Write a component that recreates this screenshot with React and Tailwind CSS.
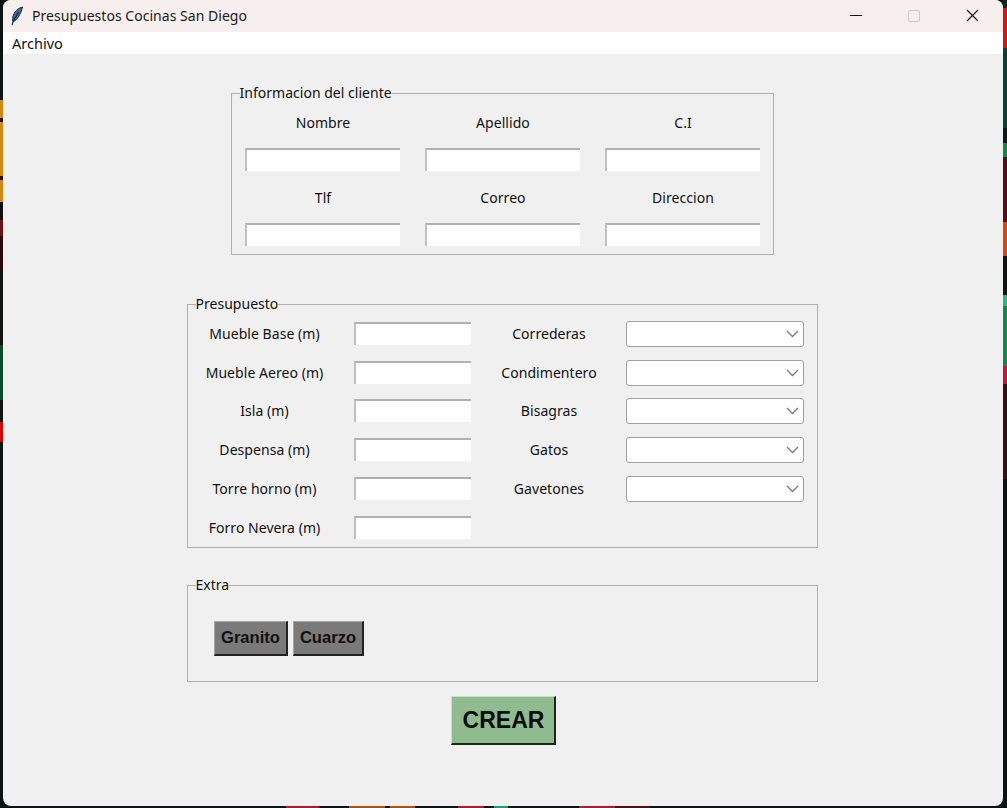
const leftStrip = [
  ["#0b1414", 100], ["#d08a14", 18], ["#2a1010", 4], ["#d08a14", 54], ["#2a1010", 4], ["#d08a14", 22],
  ["#0f0f0f", 18], ["#6a1414", 16], ["#2a0a0f", 34], ["#0f1414", 75], ["#0c4a2c", 55], ["#0f1414", 22],
  ["#d20a0a", 20], ["#0b1414", 366],
];
const rightStrip = [
  ["#0c2a24", 8], ["#e01010", 40], ["#0c4034", 80], ["#0f1a1a", 15], ["#0f8a3a", 14], ["#5a0a18", 65],
  ["#d8480f", 34], ["#101414", 39], ["#25b888", 11], ["#0f8a4a", 60], ["#c8143c", 18], ["#3a1010", 95], ["#0a1214", 329],
];
const bottomStrip = [
  ["#0b1414", 286], ["#b01834", 33], ["#0b1414", 30], ["#a8521c", 36], ["#0b1414", 5], ["#a8521c", 25],
  ["#0b1414", 43], ["#b01834", 26], ["#0b1414", 10], ["#1f9a78", 14], ["#0b1414", 71], ["#b01834", 36],
  ["#4a1018", 35], ["#0b1414", 354],
];

function Entry({ className }) {
  return (
    <input
      readOnly
      className={`block bg-white outline-none border-t-2 border-l-2 border-r-0 border-b-0 border-t-[#b0b0b0] border-l-[#c0c0c0] ${className}`}
    />
  );
}

function Combo() {
  return (
    <div className="w-[178px] h-[26px] bg-white border border-[#a0a0a0] rounded-[3px] flex items-center justify-end pr-[4px]">
      <svg width="13" height="8" viewBox="0 0 13 8" fill="none" stroke="#7a7a7a" strokeWidth="1.3">
        <path d="M1 1l5.5 5.5L12 1" />
      </svg>
    </div>
  );
}

function Group({ title, className, children }) {
  return (
    <fieldset className={`border border-[#b0b0b0] ${className}`}>
      <legend className="ml-[8px] text-[14px] tracking-[0.02px] leading-[16px] text-[#111]">{title}</legend>
      {children}
    </fieldset>
  );
}

function Info({ label }) {
  return (
    <div className="w-[155px] flex flex-col items-center">
      <div className="h-[24px] pl-[2px] leading-[24px] text-[14px] tracking-[0.05px] text-[#111] whitespace-nowrap">{label}</div>
      <Entry className="w-[155px] h-[23px] mt-[13px]" />
    </div>
  );
}

const left = ["Mueble Base (m)", "Mueble Aereo (m)", "Isla (m)", "Despensa (m)", "Torre horno (m)", "Forro Nevera (m)"];
const right = ["Correderas", "Condimentero", "Bisagras", "Gatos", "Gavetones"];
const btn = "bg-[#7a7a7a] pl-[1px] border-t border-l border-r-2 border-b-2 border-t-[#a8a8a8] border-l-[#a8a8a8] border-r-[#222] border-b-[#222] h-[35px] text-[16.6px] font-bold text-[#111] font-['Liberation_Sans',sans-serif]";

function Strip({ data, vertical }) {
  return (
    <div className={vertical ? "flex flex-col w-full" : "flex h-[2px] w-full"}>
      {data.map(([c, n], i) => (
        <div key={i} style={vertical ? { background: c, height: n } : { background: c, width: n }} />
      ))}
    </div>
  );
}

export default function App() {
  return (
    <div className="w-[1007px] h-[808px] overflow-hidden bg-[#0b1414] font-['Noto_Sans','Open_Sans',sans-serif]">
      <div className="flex h-[806px]">
        <div className="w-[3px] shrink-0"><Strip data={leftStrip} vertical /></div>
        <div className="w-[1000px] h-[806px] shrink-0 rounded-[8px] overflow-hidden bg-[#f0f0f0] flex flex-col">
          <div className="h-[32px] shrink-0 bg-[#f6efed] flex items-center">
            <svg className="ml-[7px]" width="14" height="20" viewBox="0 0 14 20">
              <path d="M12.5 1C8 2 4 6 2.8 11c-.4 2-.3 3.6.2 4.6C7 14.5 11 8 12.5 1z" fill="#3d6d9e" stroke="#16283c" strokeWidth="1" />
              <path d="M8.5 6 3.4 15 2 19" fill="none" stroke="#16283c" strokeWidth="1.1" />
            </svg>
            <span className="ml-[8px] mb-[2px] text-[14px] tracking-[0.03px] text-[#1a1a1a] whitespace-nowrap">Presupuestos Cocinas San Diego</span>
            <div className="ml-auto flex items-center mr-[24px] mb-[1px]">
              <div className="w-[12px] h-px bg-[#111]" />
              <div className="ml-[46px] w-[12px] h-[12px] border border-[#cfcbc9] rounded-[2px]" />
              <svg className="ml-[46px]" width="13" height="13" viewBox="0 0 13 13" stroke="#111" strokeWidth="1.1"><path d="M1 1l11 11M12 1 1 12" /></svg>
            </div>
          </div>
          <div className="h-[22px] shrink-0 bg-white flex items-center pl-[9px] pt-[2px] text-[14.5px] text-[#111]">Archivo</div>

          <main className="flex flex-col items-center pr-[2px]">
            <Group title="Informacion del cliente" className="w-[543px] h-[170px] mt-[31px]">
              <div className="grid grid-cols-[155px_155px_155px] gap-x-[25px] gap-y-[15px] mt-[10px] ml-[13px]">
                {["Nombre", "Apellido", "C.I", "Tlf", "Correo", "Direccion"].map((l) => (
                  <Info key={l} label={l} />
                ))}
              </div>
            </Group>

            <Group title="Presupuesto" className="w-[631px] h-[252px] mt-[41px]">
              <div className="grid grid-cols-[126px_117px_155px_178px] auto-rows-[38.8px] items-center mt-[2px] ml-[14px]">
                {left.map((l, i) => (
                  <div key={l} className="contents">
                    <div className="text-[14px] tracking-[0.05px] text-center text-[#111] whitespace-nowrap">{l}</div>
                    <Entry className="ml-[26px] w-[117px] h-[23px]" />
                    <div className="ml-[26px] pl-[2px] w-[155px] text-[14px] tracking-[0.05px] text-center text-[#111] whitespace-nowrap">{right[i] || ""}</div>
                    <div className="ml-[26px] mt-[1px]">{right[i] ? <Combo /> : null}</div>
                  </div>
                ))}
              </div>
            </Group>

            <Group title="Extra" className="w-[631px] h-[105px] mt-[29px]">
              <div className="flex gap-[5px] mt-[28px] ml-[26px]">
                <button className={`w-[74px] ${btn}`}>Granito</button>
                <button className={`w-[71px] ${btn}`}>Cuarzo</button>
              </div>
            </Group>

            <button className="w-[105px] h-[49px] mt-[14px] ml-[2px] pl-[2px] bg-[#8fbc8f] border-t border-l border-r-2 border-b-2 border-t-[#c6e4c6] border-l-[#c6e4c6] border-r-[#222] border-b-[#222] text-[23px] font-bold text-[#0a0a0a] font-['Liberation_Sans',sans-serif]">CREAR</button>
          </main>
        </div>
        <div className="w-[4px] shrink-0"><Strip data={rightStrip} vertical /></div>
      </div>
      <Strip data={bottomStrip} />
    </div>
  );
}
